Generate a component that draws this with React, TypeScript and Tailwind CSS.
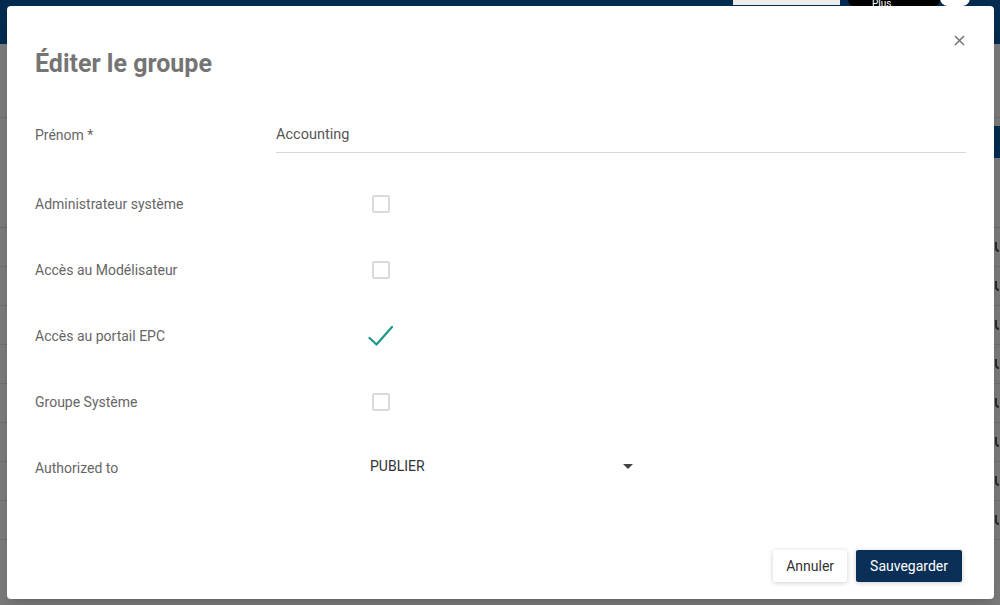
import React, { useState } from 'react';

const font = { fontFamily: 'Roboto, "Noto Sans", sans-serif' };

const Checkbox: React.FC<{ checked: boolean; onToggle: () => void }> = ({ checked, onToggle }) => (
  <button onClick={onToggle} className="w-[26px] h-[26px] flex items-center justify-center">
    {checked ? (
      <svg width="26" height="22" viewBox="0 0 26 22" fill="none">
        <path d="M1.5 13 L8.5 19.5 L24 2" stroke="#1a9886" strokeWidth="2.2" strokeLinecap="round" strokeLinejoin="round" />
      </svg>
    ) : (
      <span className="block w-[18px] h-[18px] border-2 border-[#dadada] rounded-[2px] bg-white" />
    )}
  </button>
);

const BackgroundPage: React.FC = () => (
  <div className="w-[1000px] h-[605px] bg-[#f2f2f2] flex flex-col">
    <div className="h-[44px] bg-[#03579f] shrink-0" />
    <div className="flex-1 flex flex-col">
      <div className="h-[74px] border-b border-[#d9d9d9] px-2 pt-4 text-[#333] text-sm">Vue</div>
      <div className="h-[60px] flex justify-end pt-[8px]">
        <div className="w-[60px] h-[32px] bg-[#03579f] text-white text-xs px-2 pt-2">A</div>
      </div>
      <div className="h-[50px] border-b border-[#d0d0d0]" />
      {Array.from({ length: 8 }).map((_, i) => (
        <div key={i} className="h-[39px] border-b border-[#d9d9d9] flex justify-end items-center pr-[1px]">
          <span className="w-[4px] h-[10px] border-l-2 border-b-2 border-[#555] rounded-bl-sm" />
        </div>
      ))}
      <div className="flex items-end h-[20px] text-[#333] text-xs">
        <span className="ml-[345px] w-[12px] h-[12px] border border-[#666] rounded-sm" />
        <span className="ml-[178px] w-[14px] h-[14px] bg-[#03579f] rounded-sm" />
        <span className="ml-[243px] w-[14px] h-[14px] bg-[#03579f] rounded-sm" />
        <span className="ml-[120px]">AUCUNE</span>
      </div>
    </div>
  </div>
);

export default function App() {
  const [name, setName] = useState('Accounting');
  const [flags, setFlags] = useState([false, false, true, false]);
  const labels = ['Administrateur système', 'Accès au Modélisateur', 'Accès au portail EPC', 'Groupe Système'];

  return (
    <div className="relative w-[1000px] h-[605px] overflow-hidden" style={font}>
      <BackgroundPage />
      <div className="absolute inset-0 bg-black/50">
        <div className="ml-[7px] mt-[6px] w-[987px] h-[593px] bg-white rounded-[4px] shadow-lg relative flex flex-col px-[28px]">
          <button className="absolute right-[28px] top-[27px] w-[14px] h-[14px] flex items-center justify-center">
            <svg width="11" height="11" viewBox="0 0 11 11">
              <path d="M1 1 L10 10 M10 1 L1 10" stroke="#777" strokeWidth="1.6" />
            </svg>
          </button>

          <h2 className="pt-[43px] text-[25px] leading-[30px] font-bold text-[#757575]">Éditer le groupe</h2>

          <div className="mt-[38px] flex items-center h-[36px]">
            <label className="w-[241px] text-sm text-[#666]">Prénom *</label>
            <input
              value={name}
              onChange={(e) => setName(e.target.value)}
              className="flex-1 h-[36px] border-b border-[#d6d6d6] text-[14.5px] text-[#555] outline-none bg-transparent"
            />
          </div>

          <div className="mt-[18px] flex flex-col">
            {labels.map((label, i) => (
              <div key={label} className="h-[66px] flex items-center">
                <span className="w-[333px] text-sm text-[#666]">{label}</span>
                <Checkbox
                  checked={flags[i]}
                  onToggle={() => setFlags(flags.map((f, j) => (j === i ? !f : f)))}
                />
              </div>
            ))}
            <div className="h-[66px] flex items-center">
              <span className="w-[335px] text-sm text-[#666]">Authorized to</span>
              <div className="w-[268px] flex items-center justify-between -mt-[4px]">
                <span className="text-sm text-[#333]">PUBLIER</span>
                <svg width="10" height="5" viewBox="0 0 10 5" className="mr-[5px]">
                  <path d="M0 0 L10 0 L5 5 Z" fill="#444" />
                </svg>
              </div>
            </div>
          </div>

          <div className="mt-auto mb-[17px] flex justify-end gap-[9px] pr-[4px]">
            <button className="h-[32px] px-[13px] bg-white text-[#333] text-sm rounded-[2px] shadow-[0_1px_5px_rgba(0,0,0,0.2)]">
              Annuler
            </button>
            <button className="h-[32px] px-[14px] bg-[#0a2f57] text-white text-sm rounded-[2px] shadow-[0_1px_5px_rgba(0,0,0,0.2)]">
              Sauvegarder
            </button>
          </div>
        </div>
      </div>
      <div className="absolute top-0 left-[733px] w-[107px] h-[5px] bg-[#ececec]" />
      <div className="absolute top-0 left-[848px] w-[92px] h-[6px] bg-black rounded-b-full overflow-visible">
        <span className="block pl-[24px] text-white text-[10px] leading-[8px]">Plus</span>
      </div>
      <div className="absolute -top-[10px] left-[940px] w-[30px] h-[16px] bg-white rounded-full" />
    </div>
  );
}
